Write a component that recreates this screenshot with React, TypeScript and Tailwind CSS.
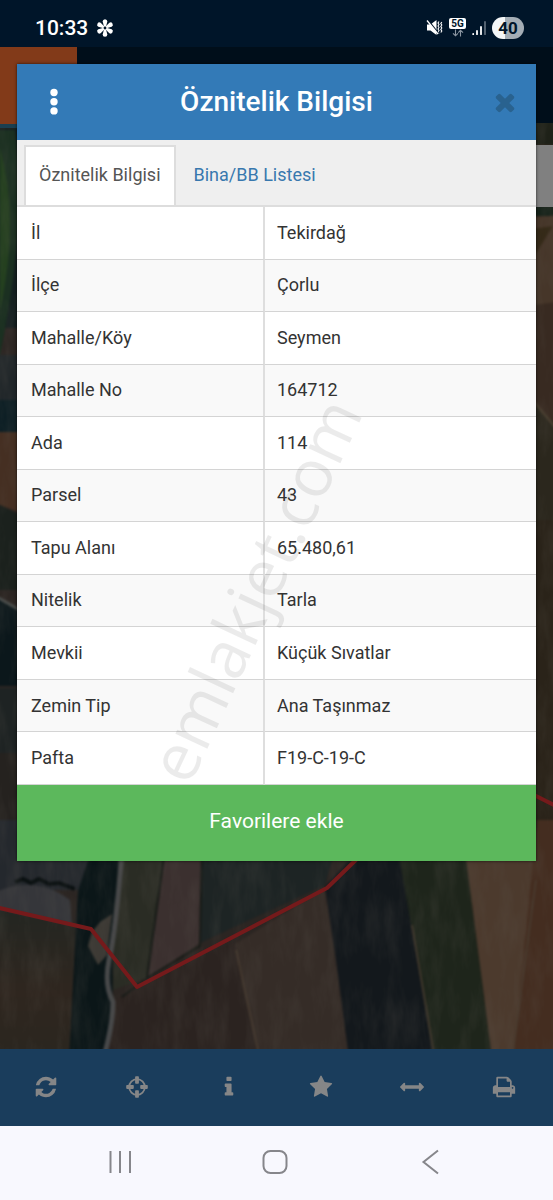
import React from "react";

const attributes: [string, string][] = [
  ["İl", "Tekirdağ"],
  ["İlçe", "Çorlu"],
  ["Mahalle/Köy", "Seymen"],
  ["Mahalle No", "164712"],
  ["Ada", "114"],
  ["Parsel", "43"],
  ["Tapu Alanı", "65.480,61"],
  ["Nitelik", "Tarla"],
  ["Mevkii", "Küçük Sıvatlar"],
  ["Zemin Tip", "Ana Taşınmaz"],
  ["Pafta", "F19-C-19-C"],
];

const icons = {
  refresh:
    "M1639 1056q0 5-1 7-64 268-268 434.5t-478 166.5q-146 0-282.5-55t-243.5-157l-129 129q-19 19-45 19t-45-19-19-45v-448q0-26 19-45t45-19h448q26 0 45 19t19 45-19 45l-137 137q71 66 161 102t187 36q134 0 250-65t186-179q11-17 53-117 8-23 30-23h192q13 0 22.5 9.5t9.5 22.5zm25-800v448q0 26-19 45t-45 19h-448q-26 0-45-19t-19-45 19-45l138-138q-148-137-349-137-134 0-250 65t-186 179q-11 17-53 117-8 23-30 23h-199q-13 0-22.5-9.5t-9.5-22.5v-7q65-268 270-434.5t480-166.5q146 0 284 55.5t245 156.5l130-129q19-19 45-19t45 19 19 45z",
  info: "M1216 1344v128q0 26-19 45t-45 19h-512q-26 0-45-19t-19-45v-128q0-26 19-45t45-19h64v-384h-64q-26 0-45-19t-19-45v-128q0-26 19-45t45-19h384q26 0 45 19t19 45v576h64q26 0 45 19t19 45zm-128-1152v192q0 26-19 45t-45 19h-256q-26 0-45-19t-19-45v-192q0-26 19-45t45-19h256q26 0 45 19t19 45z",
  star: "M1728 647q0 22-26 48l-363 354 86 500q1 7 1 20 0 21-10.5 35.5t-30.5 14.5q-19 0-40-12l-449-236-449 236q-22 12-40 12-21 0-31.5-14.5t-10.5-35.5q0-6 2-20l86-500-364-354q-25-27-25-48 0-37 56-46l502-73 225-455q19-41 49-41t49 41l225 455 502 73q56 9 56 46z",
  arrows:
    "M1792 896q0 26-19 45l-256 256q-19 19-45 19t-45-19-19-45v-128h-1024v128q0 26-19 45t-45 19-45-19l-256-256q-19-19-19-45t19-45l256-256q19-19 45-19t45 19 19 45v128h1024v-128q0-26 19-45t45-19 45 19l256 256q19 19 19 45z",
  print:
    "M448 1536h896v-256h-896v256zm0-640h896v-384h-160q-40 0-68-28t-28-68v-160h-640v640zm1152 64q0-26-19-45t-45-19-45 19-19 45 19 45 45 19 45-19 19-45zm128 0v416q0 13-9.5 22.5t-22.5 9.5h-224v160q0 40-28 68t-68 28h-960q-40 0-68-28t-28-68v-160h-224q-13 0-22.5-9.5t-9.5-22.5v-416q0-79 56.5-135.5t135.5-56.5h64v-544q0-40 28-68t68-28h672q40 0 88 20t76 48l152 152q28 28 48 76t20 88v256h64q79 0 135.5 56.5t56.5 135.5z",
  times:
    "M1490 1322q0 40-28 68l-136 136q-28 28-68 28t-68-28l-294-294-294 294q-28 28-68 28t-68-28l-136-136q-28-28-28-68t28-68l294-294-294-294q-28-28-28-68t28-68l136-136q28-28 68-28t68 28l294 294 294-294q28-28 68-28t68 28l136 136q28 28 28 68t-28 68l-294 294 294 294q28 28 28 68z",
};

function Icon({ d, className = "size-6" }: { d: string; className?: string }) {
  return (
    <svg viewBox="0 0 1792 1792" fill="currentColor" className={className} aria-hidden="true">
      <path d={d} />
    </svg>
  );
}

function Crosshairs() {
  return (
    <svg viewBox="0 0 24 24" className="size-6" aria-hidden="true">
      <circle cx="12" cy="12" r="7.8" fill="none" stroke="currentColor" strokeWidth="1.8" />
      <g fill="currentColor">
        <rect x="10.1" y="1.2" width="3.8" height="7.6" rx="0.8" />
        <rect x="10.1" y="15.2" width="3.8" height="7.6" rx="0.8" />
        <rect x="1.2" y="10.1" width="7.6" height="3.8" rx="0.8" />
        <rect x="15.2" y="10.1" width="7.6" height="3.8" rx="0.8" />
      </g>
    </svg>
  );
}

function StatusBar() {
  return (
    <header className="flex h-[47px] items-center justify-between bg-[#001529] pt-2 pr-[29px] pl-[35px] text-white">
      <div className="flex items-center gap-2">
        <span className="text-[21px] leading-6 font-medium">10:33</span>
        <svg viewBox="0 0 18 18" className="size-[18px]" aria-hidden="true">
          <g fill="#fff">
            {[0, 60, 120, 180, 240, 300].map((a) => (
              <path key={a} d="M8.1 8 L6.7 2.6 Q6.600 .4 9 .3 Q11.400 .4 11.300 2.600 L9.900 8 Z" transform={`rotate(${a} 9 9)`} />
            ))}
          </g>
          <circle cx="9" cy="9" r="1.4" fill="#001529" />
        </svg>
      </div>
      <div className="flex items-center gap-1.5">
        <svg viewBox="0 0 17 17" className="size-[17px]" aria-hidden="true">
          <path d="M1 5.500h3.500L10.500 1v15L4.500 11.500H1z" fill="#fff" />
          <path d="M13 2.500l-1 1.500 1 1.500-1 1.500 1 1.500-1 1.500 1 1.500-1 1.500 1 1.500M15.800 3l-1 1.500 1 1.500-1 1.500 1 1.500-1 1.500 1 1.500-1 1.500" fill="none" stroke="#fff" strokeWidth="1.1" />
          <path d="M1.800 .8L12.500 14.500" stroke="#001529" strokeWidth="1.500" />
          <path d="M1 1.500l11 13.500" stroke="#fff" strokeWidth="1.300" />
        </svg>
        <div className="flex w-[17px] flex-col items-center">
          <span className="w-full rounded-xs bg-white text-center text-[10px] leading-[11px] font-bold text-[#001529]">5G</span>
          <svg viewBox="0 0 12 8" className="h-2 w-3" fill="none" stroke="#8b96a2" strokeWidth="1.100" aria-hidden="true">
            <path d="M3.500 .5v6M1 4.300l2.500 2.500L6 4.300M8.500 7.500v-6M6.200 3.700l2.300-2.500 2.500 2.500" />
          </svg>
        </div>
        <svg viewBox="0 0 14 16" className="h-4 w-3.5" aria-hidden="true">
          <g strokeWidth="1.800" strokeLinecap="round">
            <path d="M1.200 14v.2M5 11v3.200M9 7v7.200" stroke="#fff" />
            <path d="M13 2v12.200" stroke="#5d6b79" />
          </g>
        </svg>
        <span className="w-8 rounded-full bg-linear-to-r from-[#f4f6f7] from-40% to-[#a4adb5] to-40% text-center text-[17px] leading-[22px] font-bold text-[#001529]">
          40
        </span>
      </div>
    </header>
  );
}

function SatelliteMap() {
  return (
    <svg
      viewBox="0 47 553 1002"
      preserveAspectRatio="xMidYMin slice"
      className="absolute inset-0 size-full"
      aria-hidden="true"
    >
      <defs>
        <filter id="soft" filterUnits="userSpaceOnUse" x="-20" y="20" width="600" height="1060" colorInterpolationFilters="sRGB">
          <feGaussianBlur stdDeviation="1" />
        </filter>
        <filter id="grain" x="0" y="0" width="100%" height="100%" colorInterpolationFilters="sRGB">
          <feTurbulence type="fractalNoise" baseFrequency="0.07 0.02" numOctaves="4" seed="7" />
          <feColorMatrix values="0 0 0 0 0.38  0 0 0 0 0.36  0 0 0 0 0.33  1.4 0 0 0 -0.55" />
        </filter>
        <linearGradient id="leftField" x1="0" y1="0" x2="0" y2="1">
          <stop offset="0" stopColor="#232622" />
          <stop offset="0.5" stopColor="#2f261f" />
          <stop offset="1" stopColor="#292620" />
        </linearGradient>
      </defs>
      <g filter="url(#soft)">
        <rect x="-20" y="20" width="600" height="1060" fill="#2b2522" />
        {/* strip left of the dialog */}
        <path d="M-20 128h50v200h-50z" fill="#141f20" />
        <path d="M-20 130H15Q28 220 0 355h-20z" fill="#1b3021" />
        <path d="M0 148Q20 220 0 310z" fill="#24401f" />
        <path d="M-20 355h50v45h-50z" fill="#202629" />
        <path d="M-20 400h50v32h-50z" fill="#0c1e24" />
        <path d="M-20 432h50v84L0 505h-20z" fill="#452f22" />
        <path d="M-20 505H0l30 15v70h-50z" fill="#1b211d" />
        <path d="M-20 590L0 598l30 18v70h-50z" fill="#0b171b" />
        <path d="M-10 593L30 616" stroke="#484b49" strokeWidth="3" />
        <path d="M-20 688h50v65h-50z" fill="#1e2323" />
        <path d="M-20 753h50v77h-50z" fill="#25221f" />
        {/* strip right of the dialog */}
        <path d="M525 110h50v35h-50z" fill="#1e2118" />
        <path d="M525 145h50v80h-50z" fill="#382b21" />
        <path d="M525 180h50v36h-50z" fill="#152219" />
        <path d="M525 218l50-4v88l-50 6z" fill="#463629" />
        <path d="M525 230l28-4-28 45z" fill="#332816" />
        <path d="M525 306l50-6v130h-50z" fill="#382a21" />
        <path d="M525 395l50 48v80h-50z" fill="#2b271d" />
        <path d="M530 397l25 30" stroke="#4a3e2f" strokeWidth="2" />
        <path d="M525 520h50v300h-50z" fill="#2a2319" />
        {/* fields below the dialog */}
        <path d="M-20 820H95V850L88 890H-20z" fill="#24282d" />
        <path d="M-20 900Q30 870 70 900L72 925 -20 905z" fill="#35363a" />
        <path d="M-20 905L78 928 75 1080H-20z" fill="url(#leftField)" />
        <path d="M92 850H125L113 930 112 1080H68L78 890z" fill="#0b1618" />
        <path d="M15 882l8-3 8 4 8-4 10 5 10-1 16 6" stroke="#0a1011" strokeWidth="4" fill="none" />
        <path d="M92 932L100 922 112 914 107 955 98 965 88 946z" fill="#3c3934" />
        <path d="M120 850H166L147 978 113 990 114 930z" fill="#2a2c24" />
        <path d="M165 850H203L200 943 147 978z" fill="#3b302f" />
        <path d="M202 850H335L325 885 200 943z" fill="#1d2424" />
        <path d="M113 1000L238 940 270 1080H100z" fill="#2b2320" />
        <path d="M235 944L325 888 340 990 352 1080H265z" fill="#352c27" />
        <path d="M325 887L358 850H400L412 930 440 1080H352L336 960z" fill="#13181c" />
        <path d="M398 850H465L495 1080H437L412 930z" fill="#1e251b" />
        <path d="M465 850H540L513 1080H495z" fill="#4c3a2d" />
        <path d="M537 820H580V1080H511z" fill="#442d20" />
        <path d="M122 850Q116 930 109 960 104 985 113 1002 113 1025 103 1060" fill="none" stroke="#474849" strokeWidth="5" />
        <path d="M165 850L147 978M122 997L147 978 200 946 202 850" fill="none" stroke="#171b17" strokeWidth="2" />
        <path d="M412 925L435 1060M536 880L512 1060M236 950L260 1060" fill="none" stroke="#4a3d31" strokeWidth="1.500" />
      </g>
      <rect y="47" width="553" height="1002" filter="url(#grain)" opacity="0.28" />
      <g fill="none" stroke="#751a1b" strokeWidth="4" strokeLinejoin="round">
        <path d="M-5 907L91 929 137 987 327 888 362 854" />
        <path d="M530 793L560 808" />
      </g>
    </svg>
  );
}

function AttributeDialog() {
  return (
    <section
      role="dialog"
      aria-labelledby="dialog-title"
      className="relative overflow-hidden bg-white shadow-[0_0_3px_rgba(0,0,0,0.7)]"
    >
      <div className="grid h-[76px] grid-cols-[74px_1fr_74px] items-center bg-[#337ab7] text-white">
        <button type="button" aria-label="Menü" className="flex h-full items-center justify-center">
          <svg viewBox="0 0 8 28" className="h-7 w-2" fill="currentColor" aria-hidden="true">
            <circle cx="4" cy="4.500" r="3.700" />
            <circle cx="4" cy="13.700" r="3.700" />
            <circle cx="4" cy="22.900" r="3.700" />
          </svg>
        </button>
        <h1 id="dialog-title" className="text-center text-[28px] leading-8 font-medium whitespace-nowrap">
          Öznitelik Bilgisi
        </h1>
        <button type="button" aria-label="Kapat" className="flex h-full items-center justify-center pl-3 text-[#29628f]">
          <Icon d={icons.times} className="size-7" />
        </button>
      </div>

      <div role="tablist" className="flex h-[67px] items-stretch border-b-2 border-[#ddd] bg-[#efefef] pt-[5px] pl-[7px] text-[18px]">
        <button
          type="button"
          role="tab"
          aria-selected="true"
          className="border-2 border-b-0 border-[#ddd] bg-white px-[13px] pb-1 text-[#555]"
        >
          Öznitelik Bilgisi
        </button>
        <button type="button" role="tab" aria-selected="false" className="px-[18px] pb-0.5 text-[#3878ae]">
          Bina/BB Listesi
        </button>
      </div>

      <div className="relative">
        <table className="h-[578px] w-full table-fixed border-separate border-spacing-0 text-left text-[18px] leading-6 text-[#333]">
          <colgroup>
            <col className="w-[248px]" />
            <col />
          </colgroup>
          <tbody>
            {attributes.map(([name, value]) => (
              <tr key={name} className="even:bg-[#f9f9f9]">
                <th scope="row" className="border-r-2 border-b border-r-[#dedede] border-b-[#d4d4d4] pl-3.5 font-normal">
                  {name}
                </th>
                <td className="border-b border-[#d4d4d4] pl-3">{value}</td>
              </tr>
            ))}
          </tbody>
        </table>
        <span className="pointer-events-none absolute top-[382px] left-[236px] -translate-1/2 -rotate-65 font-['Open_Sans',sans-serif] text-[66px] leading-none font-medium whitespace-nowrap text-black/8">
          emlakjet.com
        </span>
      </div>

      <button type="button" className="block h-[76px] w-full bg-[#5cb85c] pb-0.5 text-[21px] text-white">
        Favorilere ekle
      </button>
    </section>
  );
}

function Toolbar() {
  const items: [string, React.ReactNode][] = [
    ["Yenile", <Icon d={icons.refresh} />],
    ["Konum", <Crosshairs />],
    ["Bilgi", <Icon d={icons.info} />],
    ["Favoriler", <Icon d={icons.star} />],
    ["Ölçüm", <Icon d={icons.arrows} />],
    ["Yazdır", <Icon d={icons.print} />],
  ];
  return (
    <nav className="grid h-[77px] grid-cols-6 bg-[#1a3d5c] pr-[3px] pb-0.5 text-[#858687]">
      {items.map(([label, icon]) => (
        <button key={label} type="button" aria-label={label} className="flex items-center justify-center">
          {icon}
        </button>
      ))}
    </nav>
  );
}

function SystemNav() {
  return (
    <nav className="grid h-[74px] grid-cols-3 bg-[#f8f8fe] pr-[46px] pl-[42px] text-[#86868b]">
      <button type="button" aria-label="Son uygulamalar" className="flex items-center justify-center">
        <svg viewBox="0 0 28 28" className="size-7" stroke="currentColor" strokeWidth="2" aria-hidden="true">
          <path d="M4.500 2v22M14 2v22M24 2v22" />
        </svg>
      </button>
      <button type="button" aria-label="Ana ekran" className="flex items-center justify-center">
        <svg viewBox="0 0 28 28" className="size-7" fill="none" stroke="currentColor" strokeWidth="2" aria-hidden="true">
          <rect x="2.500" y="2" width="23" height="22" rx="7" />
        </svg>
      </button>
      <button type="button" aria-label="Geri" className="flex items-center justify-center">
        <svg viewBox="0 0 28 28" className="size-7" fill="none" stroke="currentColor" strokeWidth="2" aria-hidden="true">
          <path d="M22 1.500L7.500 13 22 24.500" />
        </svg>
      </button>
    </nav>
  );
}

export default function App() {
  return (
    <div lang="tr" className="flex min-h-screen flex-col font-[Roboto,sans-serif]">
      <StatusBar />
      <main className="relative flex-1 bg-[#2b2522] px-[17px] py-[17px]">
        <SatelliteMap />
        <div className="absolute inset-x-0 top-0 h-[76px] bg-[#000e1a]">
          <div className="h-[81px] w-[77px] border-b-4 border-[#1b3f50] bg-[#823a19]" />
        </div>
        <div className="absolute top-[98px] right-0 h-[62px] w-8 bg-[#808080]" />
        <AttributeDialog />
      </main>
      <Toolbar />
      <SystemNav />
    </div>
  );
}
